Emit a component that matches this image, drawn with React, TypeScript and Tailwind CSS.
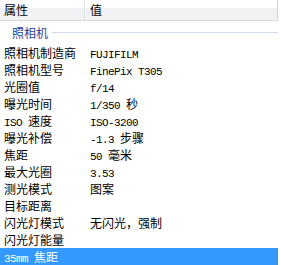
import { Fragment } from 'react'

type Row = { label: string; value?: string; selected?: boolean }

const rows: Row[] = [
  { label: '照相机制造商', value: 'FUJIFILM' },
  { label: '照相机型号', value: 'FinePix T305' },
  { label: '光圈值', value: 'f/14' },
  { label: '曝光时间', value: '1/350 秒' },
  { label: 'ISO 速度', value: 'ISO-3200' },
  { label: '曝光补偿', value: '-1.3 步骤' },
  { label: '焦距', value: '50 毫米' },
  { label: '最大光圈', value: '3.53' },
  { label: '测光模式', value: '图案' },
  { label: '目标距离' },
  { label: '闪光灯模式', value: '无闪光，强制' },
  { label: '闪光灯能量' },
  { label: '35mm 焦距', selected: true },
]

// latin runs use a narrow mono face, CJK runs the wide one; both sit on one baseline
function MixedText({ text }: { text: string }) {
  const parts = text.split(/([\x00-\x7f]+)/).filter(Boolean)
  return (
    <>
      {parts.map((part, i) =>
        /^[\x00-\x7f]+$/.test(part) ? (
          <span key={i} className="font-['Liberation_Mono',monospace] text-[11px] tracking-[-0.6px] leading-none whitespace-pre">
            {part}
          </span>
        ) : (
          <span key={i} className="font-['Noto_Sans_CJK_SC',sans-serif] text-[12px] leading-none">
            {part}
          </span>
        )
      )}
    </>
  )
}

export default function App() {
  return (
    <div className="w-[281px] h-[265px] bg-white overflow-hidden font-['Noto_Sans_CJK_SC',sans-serif] text-black">
      <div className="w-[278px]">
        {/* Column headers */}
        <div className="flex h-[21px] border-b border-[#d5d8dc] bg-[linear-gradient(to_bottom,#ffffff_0%,#ffffff_38%,#f1f2f4_40%,#f1f2f4_100%)]">
          <div className="w-[85px] flex items-center pl-[4px] border-r border-[#e0e3e7] text-[12px] leading-none">属性</div>
          <div className="flex-1 flex items-center pl-[5px] border-r border-[#d0d3d8] text-[12px] leading-none">值</div>
        </div>

        {/* Group header */}
        <div className="flex items-center h-[23px] pl-[12px]">
          <span className="text-[12px] leading-none text-[#1f3f98]">照相机</span>
          <div className="flex-1 h-px bg-[#cfd8e8] ml-[4px]" />
        </div>

        {rows.map((row) => (
          <Fragment key={row.label}>
            <div
              className={`flex h-[17px] text-[12px] leading-[17px] ${
                row.selected ? 'bg-[#3399ff] text-white' : ''
              }`}
            >
              <div className="w-[86px] pl-[4px] h-[17px] whitespace-nowrap">
                <MixedText text={row.label} />
              </div>
              <div className="flex-1 pl-[4px] h-[17px] whitespace-nowrap">
                {row.value && <MixedText text={row.value} />}
              </div>
            </div>
          </Fragment>
        ))}
      </div>
    </div>
  )
}
